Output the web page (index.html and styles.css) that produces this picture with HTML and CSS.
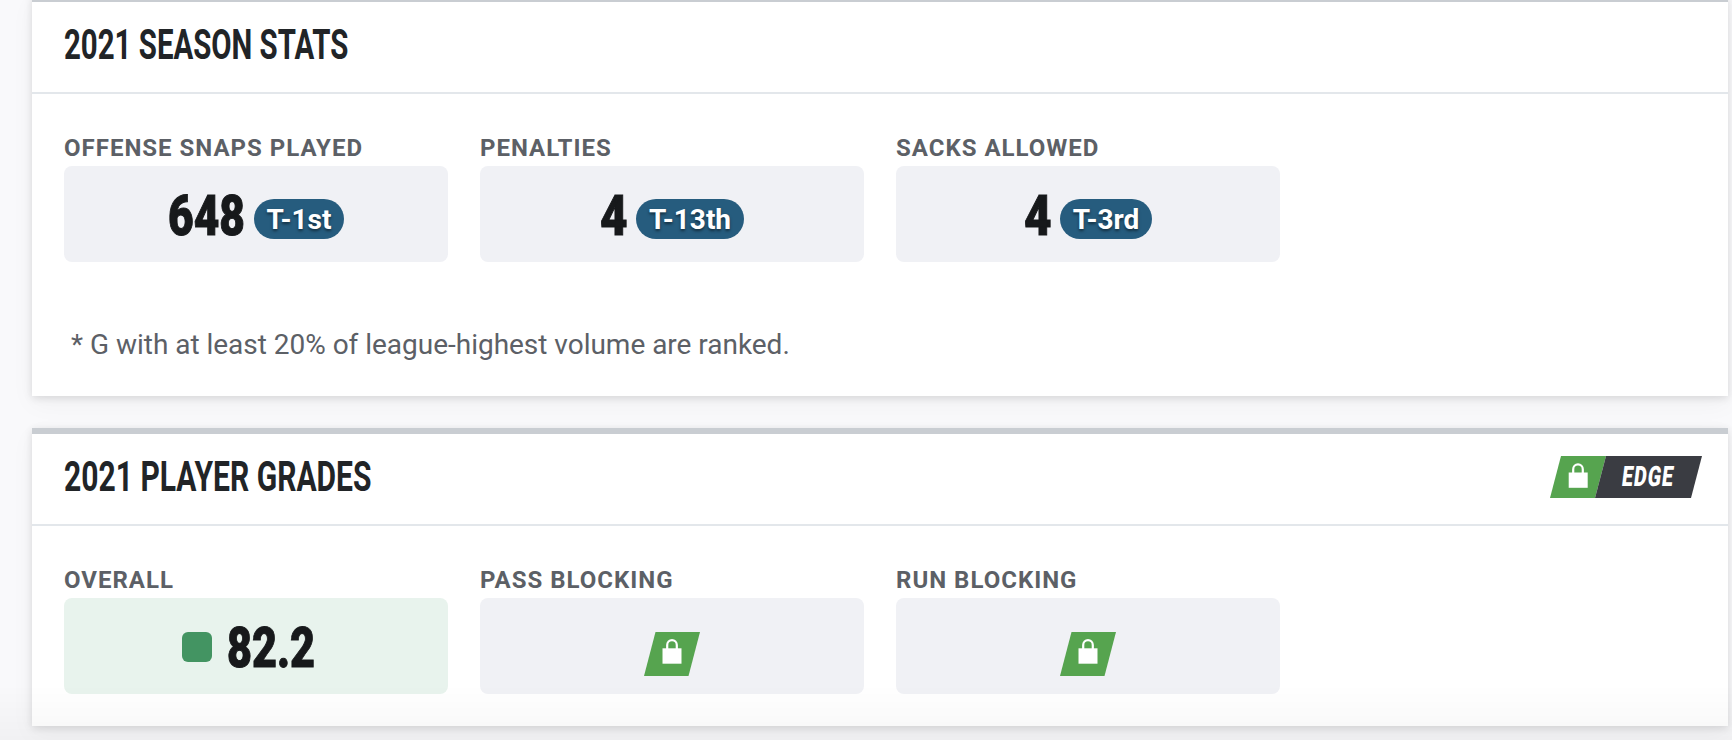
FILE: index.html
```html
<!DOCTYPE html>
<html lang="en">
  <head>
    <meta charset="UTF-8" />
    <title>2021 Player Stats</title>
    <link rel="stylesheet" href="styles.css">
  </head>
  <body>
    <div class="page">
      <section class="card">
        <header class="card-header">
          <h2>2021 SEASON STATS</h2>
        </header>
        <div class="stats">
          <div class="stat">
            <div class="label">OFFENSE SNAPS PLAYED</div>
            <div class="value">
              <span class="number snaps"><b>648</b></span>
              <span class="rank rank-1st">T-1st</span>
            </div>
          </div>
          <div class="stat">
            <div class="label">PENALTIES</div>
            <div class="value">
              <span class="number single"><b>4</b></span>
              <span class="rank rank-13th">T-13th</span>
            </div>
          </div>
          <div class="stat">
            <div class="label">SACKS ALLOWED</div>
            <div class="value">
              <span class="number single"><b>4</b></span>
              <span class="rank rank-3rd">T-3rd</span>
            </div>
          </div>
        </div>
        <p class="note">* G with at least 20% of league-highest volume are ranked.</p>
      </section>

      <section class="card">
        <header class="card-header">
          <h2 class="grades-title">2021 PLAYER GRADES</h2>
          <div class="edge">
            <svg class="edge-lock" width="56" height="42" viewBox="0 0 56 42">
              <path fill="#56a44f" d="M11 0h45L45 42H0z" />
              <path fill="#fff" d="M18.7 16.5h19v15.3h-19z" />
              <path fill="none" stroke="#fff" stroke-width="2.2" d="M23.2 17v-3.8a4.8 4.8 0 0 1 9.6 0V17" />
            </svg>
            <span class="edge-label"><i>EDGE</i></span>
          </div>
        </header>
        <div class="stats">
          <div class="stat">
            <div class="label">OVERALL</div>
            <div class="value graded">
              <span class="swatch"></span>
              <span class="number grade"><b>82.2</b></span>
            </div>
          </div>
          <div class="stat">
            <div class="label">PASS BLOCKING</div>
            <div class="value">
              <svg class="lock" width="56" height="44" viewBox="0 0 56 44">
                <path fill="#56a44f" d="M11.5 0H56L44.5 44H0z" />
                <path fill="#fff" d="M18.5 16.3h19v15.4h-19z" />
                <path fill="none" stroke="#fff" stroke-width="2.2" d="M23.2 17v-4a4.8 4.8 0 0 1 9.6 0v4" />
              </svg>
            </div>
          </div>
          <div class="stat">
            <div class="label">RUN BLOCKING</div>
            <div class="value">
              <svg class="lock" width="56" height="44" viewBox="0 0 56 44">
                <path fill="#56a44f" d="M11.5 0H56L44.5 44H0z" />
                <path fill="#fff" d="M18.5 16.3h19v15.4h-19z" />
                <path fill="none" stroke="#fff" stroke-width="2.2" d="M23.2 17v-4a4.8 4.8 0 0 1 9.6 0v4" />
              </svg>
            </div>
          </div>
        </div>
      </section>
    </div>
    <div class="fade"></div>
  </body>
</html>
```
FILE: styles.css
```css
* {
  box-sizing: border-box;
}
body {
  margin: 0;
  height: 740px;
  overflow: hidden;
  background: #f9f9fb;
  font-family: Roboto, sans-serif;
  color: #5c6066;
}
.page {
  display: flex;
  flex-direction: column;
  gap: 32px;
  margin-top: -4px;
  padding: 0 4px 0 32px;
}
.card {
  padding-bottom: 32px;
  background: #fff;
  border-top: 6px solid #c9cdd2;
  box-shadow: 0 2px 8px rgba(0, 0, 0, 0.12), 0 8px 24px rgba(0, 0, 0, 0.04);
}
.card-header {
  display: flex;
  justify-content: space-between;
  height: 92px;
  padding: 22px 26px 0 32px;
  border-bottom: 2px solid #e3e7eb;
}
h2 {
  margin: 0;
  width: 300px;
  font-size: 42px;
  font-weight: 700;
  line-height: 42px;
  color: #212427;
  white-space: nowrap;
  transform: scaleX(0.7);
  transform-origin: left;
}
.grades-title {
  transform: scaleX(0.715);
}
.stats {
  display: flex;
  gap: 32px;
  padding: 40px 32px 0;
}
.stat {
  width: 384px;
}
.label {
  height: 32px;
  font-size: 24px;
  font-weight: 700;
  line-height: 28px;
  letter-spacing: 1px;
}
.value {
  display: flex;
  align-items: center;
  justify-content: center;
  height: 96px;
  border-radius: 8px;
  background: #f0f1f5;
}
.graded {
  background: #e8f3ed;
}
.number {
  margin-top: 4px;
  font-size: 56px;
  line-height: 64px;
  color: #17191b;
}
.number b {
  display: block;
  font-weight: 900;
  transform: scaleX(0.77);
  transform-origin: left;
  -webkit-text-stroke: 1px #17191b;
}
.snaps {
  width: 78px;
  margin-right: 8px;
}
.snaps b {
  transform: scaleX(0.79);
}
.single {
  width: 28px;
  margin-right: 8px;
}
.single b {
  transform: scaleX(0.85);
}
.grade {
  width: 103px;
}
.rank {
  height: 40px;
  margin-top: 9px;
  border-radius: 20px;
  background: #265c7e;
  color: #fff;
  font-size: 28px;
  font-weight: 700;
  line-height: 41px;
  text-align: center;
  text-shadow: 0 2px 3px rgba(0, 0, 0, 0.5);
}
.rank-1st {
  width: 90px;
}
.rank-13th {
  width: 108px;
}
.rank-3rd {
  width: 92px;
}
.swatch {
  width: 30px;
  height: 30px;
  margin-top: 2px;
  margin-right: 15px;
  border-radius: 6px;
  background: #439462;
}
.lock {
  margin-top: 16px;
}
.note {
  margin: 64px 0 0 39px;
  font-size: 28px;
  line-height: 38px;
  letter-spacing: -0.02px;
}
.edge {
  display: flex;
  height: 42px;
}
.edge-lock {
  display: block;
}
.edge-label {
  width: 107px;
  height: 42px;
  margin-left: -11px;
  padding-left: 27px;
  background: #3a3c42;
  clip-path: polygon(11px 0, 100% 0, 96px 100%, 0 100%);
  color: #fff;
  font-size: 28px;
  line-height: 42px;
}
.edge-label i {
  display: block;
  font-style: normal;
  font-weight: 900;
  letter-spacing: 1.5px;
  transform: scaleX(0.7) skewX(-10deg);
  transform-origin: left;
}
/* soft darkening along the bottom of the window */
.fade {
  position: fixed;
  right: 0;
  bottom: 0;
  left: 0;
  height: 56px;
  background: linear-gradient(rgba(0, 0, 0, 0), rgba(0, 0, 0, 0.03));
}
```
